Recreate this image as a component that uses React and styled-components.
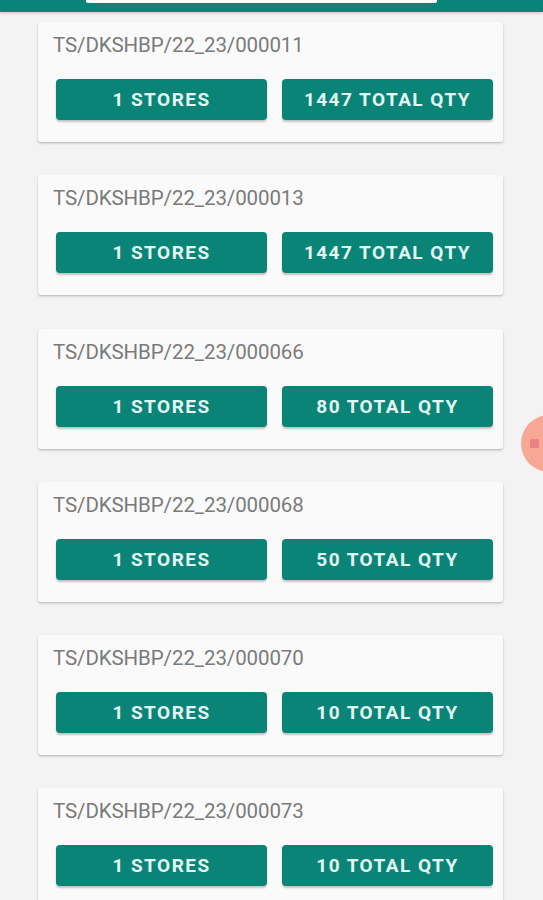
import React from 'react';
import styled, { createGlobalStyle } from 'styled-components';

const GlobalStyle = createGlobalStyle`
	html, body {
		margin: 0;
		padding: 0;
		background: #f3f3f3;
		font-family: Roboto, "Noto Sans", Arial, sans-serif;
	}
`;

const Screen = styled.div`
	position: relative;
	width: 543px;
	height: 900px;
	overflow: hidden;
	background: #f3f3f3;
`;

const Header = styled.div`
	height: 12px;
	background: #0b8478;
	display: flex;
	justify-content: flex-start;
	padding-left: 86px;
	box-shadow: 0 1px 3px rgba(0, 0, 0, 0.2);
`;

const SearchBox = styled.div`
	width: 351px;
	height: 3px;
	background: #fbfbfb;
	border-radius: 0 0 2px 2px;
`;

const List = styled.div`
	display: flex;
	flex-direction: column;
	gap: 33.3px;
	padding: 10px 40px 0 38px;
`;

const Card = styled.div`
	height: 120px;
	box-sizing: border-box;
	background: #fafafa;
	border-radius: 3px;
	box-shadow: 0 1px 2px rgba(0, 0, 0, 0.18), 0 2px 3px rgba(0, 0, 0, 0.08);
	padding: 12px 10px 0 15px;
	display: flex;
	flex-direction: column;
`;

const Title = styled.div`
	font-size: 20.5px;
	line-height: 22px;
	color: #7a7a7a;
	letter-spacing: -0.1px;
`;

const Buttons = styled.div`
	display: grid;
	grid-template-columns: 1fr 1fr;
	gap: 15px;
	margin: 23px 0 0 3px;
`;

const Button = styled.button`
	height: 41px;
	border: none;
	border-radius: 4px;
	background: #0b8478;
	color: #e3f7f3;
	font-family: Roboto, "Noto Sans", Arial, sans-serif;
	font-weight: 700;
	font-size: 19px;
	letter-spacing: 1.45px;
	text-transform: uppercase;
	box-shadow: 0 2px 2px rgba(0, 0, 0, 0.22);
	padding: 0;
`;

const Bubble = styled.div`
	position: absolute;
	left: 521px;
	top: 415px;
	width: 57px;
	height: 57px;
	border-radius: 50%;
	background: #f7a58f;
	opacity: 0.95;
`;

const BubbleDot = styled.div`
	position: absolute;
	left: 9px;
	top: 24px;
	width: 9px;
	height: 9px;
	border-radius: 1px;
	background: #ec7c7a;
`;

const orders = [
	{ id: 'TS/DKSHBP/22_23/000011', stores: 1, qty: 1447 },
	{ id: 'TS/DKSHBP/22_23/000013', stores: 1, qty: 1447 },
	{ id: 'TS/DKSHBP/22_23/000066', stores: 1, qty: 80 },
	{ id: 'TS/DKSHBP/22_23/000068', stores: 1, qty: 50 },
	{ id: 'TS/DKSHBP/22_23/000070', stores: 1, qty: 10 },
	{ id: 'TS/DKSHBP/22_23/000073', stores: 1, qty: 10 },
];

const App = () => {
	return (
		<Screen>
			<GlobalStyle />
			<Header>
				<SearchBox />
			</Header>
			<List>
				{orders.map((o) => (
					<Card key={o.id}>
						<Title>{o.id}</Title>
						<Buttons>
							<Button>{o.stores} Stores</Button>
							<Button>{o.qty} Total Qty</Button>
						</Buttons>
					</Card>
				))}
			</List>
			<Bubble>
				<BubbleDot />
			</Bubble>
		</Screen>
	);
};

export default App;
